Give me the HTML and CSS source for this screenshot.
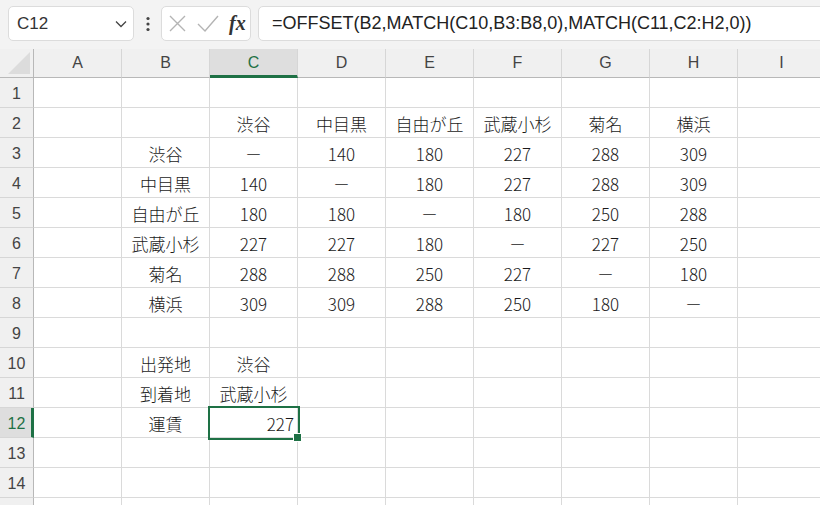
FILE: index.html
```html
<!DOCTYPE html>
<html lang="ja">
<head>
    <meta charset="UTF-8">
    <title>運賃表</title>
    <link rel="stylesheet" href="styles.css">
</head>
<body>

    <!-- Formula bar -->
    <div class="toolbar">
        <div class="namebox">
            <span>C12</span>
            <svg width="12" height="8" viewBox="0 0 12 8"><path d="M1 1.5 L6 6.5 L11 1.5" fill="none" stroke="#444" stroke-width="1.3"/></svg>
        </div>
        <div class="dots">
            <svg width="4" height="16" viewBox="0 0 4 16"><circle cx="2" cy="2.5" r="1.6" fill="#444"/><circle cx="2" cy="8" r="1.6" fill="#444"/><circle cx="2" cy="13.5" r="1.6" fill="#444"/></svg>
        </div>
        <div class="fxbox">
            <svg width="17" height="17" viewBox="0 0 17 17"><path d="M1 1 L16 16 M16 1 L1 16" stroke="#b4b4b4" stroke-width="1.4"/></svg>
            <svg width="22" height="17" viewBox="0 0 22 17"><path d="M1 9 L8 16 L21 1" fill="none" stroke="#b4b4b4" stroke-width="1.4"/></svg>
            <span class="fx">fx</span>
        </div>
        <div class="formula">=OFFSET(B2,MATCH(C10,B3:B8,0),MATCH(C11,C2:H2,0))</div>
    </div>

    <!-- Sheet grid -->
    <div class="sheet">
        <div class="corner"><svg width="22" height="22" viewBox="0 0 22 22"><path d="M22 0 L22 22 L0 22 Z" fill="#dcdcdc"/></svg></div>
        <div class="col-head">A</div>
        <div class="col-head">B</div>
        <div class="col-head active">C</div>
        <div class="col-head">D</div>
        <div class="col-head">E</div>
        <div class="col-head">F</div>
        <div class="col-head">G</div>
        <div class="col-head">H</div>
        <div class="col-head">I</div>

        <div class="row-head">1</div>
        <div class="cell"></div><div class="cell"></div><div class="cell"></div><div class="cell"></div><div class="cell"></div><div class="cell"></div><div class="cell"></div><div class="cell"></div><div class="cell"></div>

        <div class="row-head">2</div>
        <div class="cell"></div><div class="cell"></div><div class="cell">渋谷</div><div class="cell">中目黒</div><div class="cell">自由が丘</div><div class="cell">武蔵小杉</div><div class="cell">菊名</div><div class="cell">横浜</div><div class="cell"></div>

        <div class="row-head">3</div>
        <div class="cell"></div><div class="cell">渋谷</div><div class="cell">－</div><div class="cell">140</div><div class="cell">180</div><div class="cell">227</div><div class="cell">288</div><div class="cell">309</div><div class="cell"></div>

        <div class="row-head">4</div>
        <div class="cell"></div><div class="cell">中目黒</div><div class="cell">140</div><div class="cell">－</div><div class="cell">180</div><div class="cell">227</div><div class="cell">288</div><div class="cell">309</div><div class="cell"></div>

        <div class="row-head">5</div>
        <div class="cell"></div><div class="cell">自由が丘</div><div class="cell">180</div><div class="cell">180</div><div class="cell">－</div><div class="cell">180</div><div class="cell">250</div><div class="cell">288</div><div class="cell"></div>

        <div class="row-head">6</div>
        <div class="cell"></div><div class="cell">武蔵小杉</div><div class="cell">227</div><div class="cell">227</div><div class="cell">180</div><div class="cell">－</div><div class="cell">227</div><div class="cell">250</div><div class="cell"></div>

        <div class="row-head">7</div>
        <div class="cell"></div><div class="cell">菊名</div><div class="cell">288</div><div class="cell">288</div><div class="cell">250</div><div class="cell">227</div><div class="cell">－</div><div class="cell">180</div><div class="cell"></div>

        <div class="row-head">8</div>
        <div class="cell"></div><div class="cell">横浜</div><div class="cell">309</div><div class="cell">309</div><div class="cell">288</div><div class="cell">250</div><div class="cell">180</div><div class="cell">－</div><div class="cell"></div>

        <div class="row-head">9</div>
        <div class="cell"></div><div class="cell"></div><div class="cell"></div><div class="cell"></div><div class="cell"></div><div class="cell"></div><div class="cell"></div><div class="cell"></div><div class="cell"></div>

        <div class="row-head">10</div>
        <div class="cell"></div><div class="cell">出発地</div><div class="cell">渋谷</div><div class="cell"></div><div class="cell"></div><div class="cell"></div><div class="cell"></div><div class="cell"></div><div class="cell"></div>

        <div class="row-head">11</div>
        <div class="cell"></div><div class="cell">到着地</div><div class="cell">武蔵小杉</div><div class="cell"></div><div class="cell"></div><div class="cell"></div><div class="cell"></div><div class="cell"></div><div class="cell"></div>

        <div class="row-head active">12</div>
        <div class="cell"></div><div class="cell">運賃</div><div class="cell num selected">227</div><div class="cell"></div><div class="cell"></div><div class="cell"></div><div class="cell"></div><div class="cell"></div><div class="cell"></div>

        <div class="row-head">13</div>
        <div class="cell"></div><div class="cell"></div><div class="cell"></div><div class="cell"></div><div class="cell"></div><div class="cell"></div><div class="cell"></div><div class="cell"></div><div class="cell"></div>

        <div class="row-head">14</div>
        <div class="cell"></div><div class="cell"></div><div class="cell"></div><div class="cell"></div><div class="cell"></div><div class="cell"></div><div class="cell"></div><div class="cell"></div><div class="cell"></div>

        <!-- row 15, only its top edge shows -->
        <div class="row-head"></div>
        <div class="cell"></div><div class="cell"></div><div class="cell"></div><div class="cell"></div><div class="cell"></div><div class="cell"></div><div class="cell"></div><div class="cell"></div><div class="cell"></div>
    </div>

</body>
</html>
```

FILE: styles.css
```css
/* Reset */
* {
    margin: 0;
    padding: 0;
    box-sizing: border-box;
}

body {
    font-family: "Noto Sans CJK JP", "Liberation Sans", sans-serif;
    background-color: #f3f3f3;
    color: #222;
    width: 820px;
    height: 505px;
    overflow: hidden;
}

/* Formula bar */
.toolbar {
    height: 49px;
    display: flex;
    align-items: center;
    padding: 0 0 2px 8px;
}

.namebox {
    width: 126px;
    height: 35px;
    background-color: #fff;
    border: 1px solid #dcdcdc;
    border-radius: 5px;
    display: flex;
    align-items: center;
    justify-content: space-between;
    padding: 0 6px 0 8px;
    font-family: "Liberation Sans", sans-serif;
    font-size: 17px;
    color: #333;
}

.dots {
    width: 27px;
    display: flex;
    justify-content: center;
}

.fxbox {
    width: 90px;
    height: 35px;
    background-color: #fff;
    border: 1px solid #dcdcdc;
    border-radius: 5px;
    display: flex;
    align-items: center;
    gap: 11px;
    padding-left: 7px;
}

.fx {
    font-family: "Liberation Serif", serif;
    font-style: italic;
    font-weight: bold;
    font-size: 20px;
    color: #333;
    margin-left: -1px;
}

.formula {
    flex: 1;
    height: 35px;
    margin-left: 7px;
    margin-right: -10px;
    background-color: #fff;
    border: 1px solid #dcdcdc;
    border-radius: 5px;
    display: flex;
    align-items: center;
    padding-left: 13px;
    font-family: "Liberation Sans", sans-serif;
    font-size: 18px;
    color: #222;
}

/* Sheet */
.sheet {
    display: grid;
    grid-template-columns: 34px repeat(9, 88px);
    grid-template-rows: 29px;
    grid-auto-rows: 30px;
    background-color: #fff;
    height: 456px;
    overflow: hidden;
}

.corner {
    background-color: #f0f0f0;
    border-right: 1px solid #b8b8b8;
    border-bottom: 1px solid #b8b8b8;
    display: flex;
    align-items: flex-end;
    justify-content: flex-end;
    padding: 0 3px 3px 0;
}

.col-head {
    background-color: #f0f0f0;
    border-right: 1px solid #d6d6d6;
    border-bottom: 1px solid #b8b8b8;
    display: flex;
    align-items: center;
    justify-content: center;
    font-family: "Liberation Sans", sans-serif;
    font-size: 16px;
    color: #444;
}

.col-head.active {
    background-color: #dedede;
    border-bottom: 3px solid #1e7145;
    color: #1e7145;
    padding-top: 2px;
}

.row-head {
    background-color: #f0f0f0;
    border-right: 1px solid #b8b8b8;
    border-bottom: 1px solid #d6d6d6;
    display: flex;
    align-items: center;
    justify-content: center;
    font-family: "Liberation Sans", sans-serif;
    font-size: 16px;
    color: #444;
    padding-top: 2px;
}

.row-head.active {
    background-color: #dedede;
    border-right: 3px solid #1e7145;
    color: #1e7145;
    padding-left: 2px;
}

.cell {
    border-right: 1px solid #dadada;
    border-bottom: 1px solid #dadada;
    display: flex;
    align-items: center;
    justify-content: center;
    font-size: 17px;
    font-weight: 300;
    color: #1a1a1a;
    padding-top: 1px;
    white-space: nowrap;
}

.cell.num {
    justify-content: flex-end;
    padding-right: 3px;
}

.cell.selected {
    position: relative;
    outline: 2px solid #1e7145;
    outline-offset: 0px;
    z-index: 1;
}

/* fill handle */
.cell.selected::after {
    content: "";
    position: absolute;
    right: -5px;
    bottom: -5px;
    width: 7px;
    height: 7px;
    background-color: #1e7145;
    border: 1px solid #fff;
}
```
